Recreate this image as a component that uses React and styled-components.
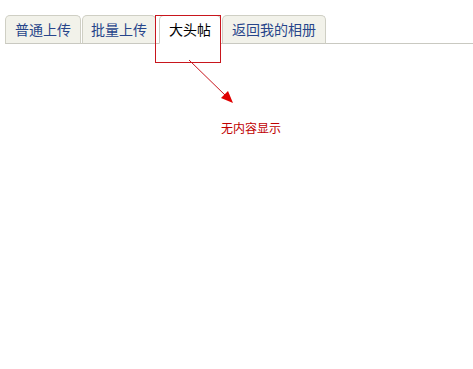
import React from 'react';
import styled, { createGlobalStyle } from 'styled-components';

const GlobalStyle = createGlobalStyle`
    html, body {
        margin: 0;
        padding: 0;
        background: #fff;
    }
    body {
        font-family: "Noto Sans CJK SC", "DejaVu Sans", sans-serif;
    }
`;

const Page = styled.div`
    position: relative;
    width: 473px;
    height: 369px;
    padding: 15px 0 0 5px;
    box-sizing: border-box;
    overflow: hidden;
`;

const TabBar = styled.ul`
    display: flex;
    align-items: flex-end;
    margin: 0;
    padding: 0;
    list-style: none;
    border-bottom: 1px solid #c9c9c1;
`;

const Tab = styled.li`
    display: flex;
    align-items: center;
    height: 29px;
    margin: 0 1px -1px 0;
    padding: 0 9px 1px;
    border: 1px solid #cfcfc4;
    border-bottom: ${p => (p.$active ? '1px solid #fff' : '1px solid #c9c9c1')};
    border-radius: 5px 5px 0 0;
    background: ${p => (p.$active ? '#fff' : '#f2f2ea')};
    color: ${p => (p.$active ? '#000' : '#27458a')};
    font-size: 14px;
    line-height: 1;
    box-sizing: border-box;
    cursor: pointer;
    white-space: nowrap;
    &:nth-child(2) {
        padding: 0 8px 1px;
    }
    &:nth-child(3) {
        margin-left: 2px;
    }
`;

const Highlight = styled.div`
    position: absolute;
    left: 155px;
    top: 15px;
    width: 66px;
    height: 48px;
    border: 1px solid #c8161d;
    box-sizing: border-box;
    pointer-events: none;
`;

const Arrow = styled.svg`
    position: absolute;
    left: 0;
    top: 0;
    pointer-events: none;
`;

const Note = styled.div`
    position: absolute;
    left: 221px;
    top: 120px;
    color: #c00000;
    font-size: 12px;
    line-height: 16px;
`;

const tabs = ['普通上传', '批量上传', '大头帖', '返回我的相册'];

export default function App() {
    return (
        <>
            <GlobalStyle />
            <Page>
                <TabBar>
                    {tabs.map((t, i) => (
                        <Tab key={t} $active={i === 2}>{t}</Tab>
                    ))}
                </TabBar>
                <Highlight />
                <Arrow width="473" height="369">
                    <line x1="189" y1="60" x2="226" y2="96" stroke="#c8161d" strokeWidth="1" />
                    <polygon points="233,103 221,98 228,91" fill="#e00000" />
                </Arrow>
                <Note>无内容显示</Note>
            </Page>
        </>
    );
}
